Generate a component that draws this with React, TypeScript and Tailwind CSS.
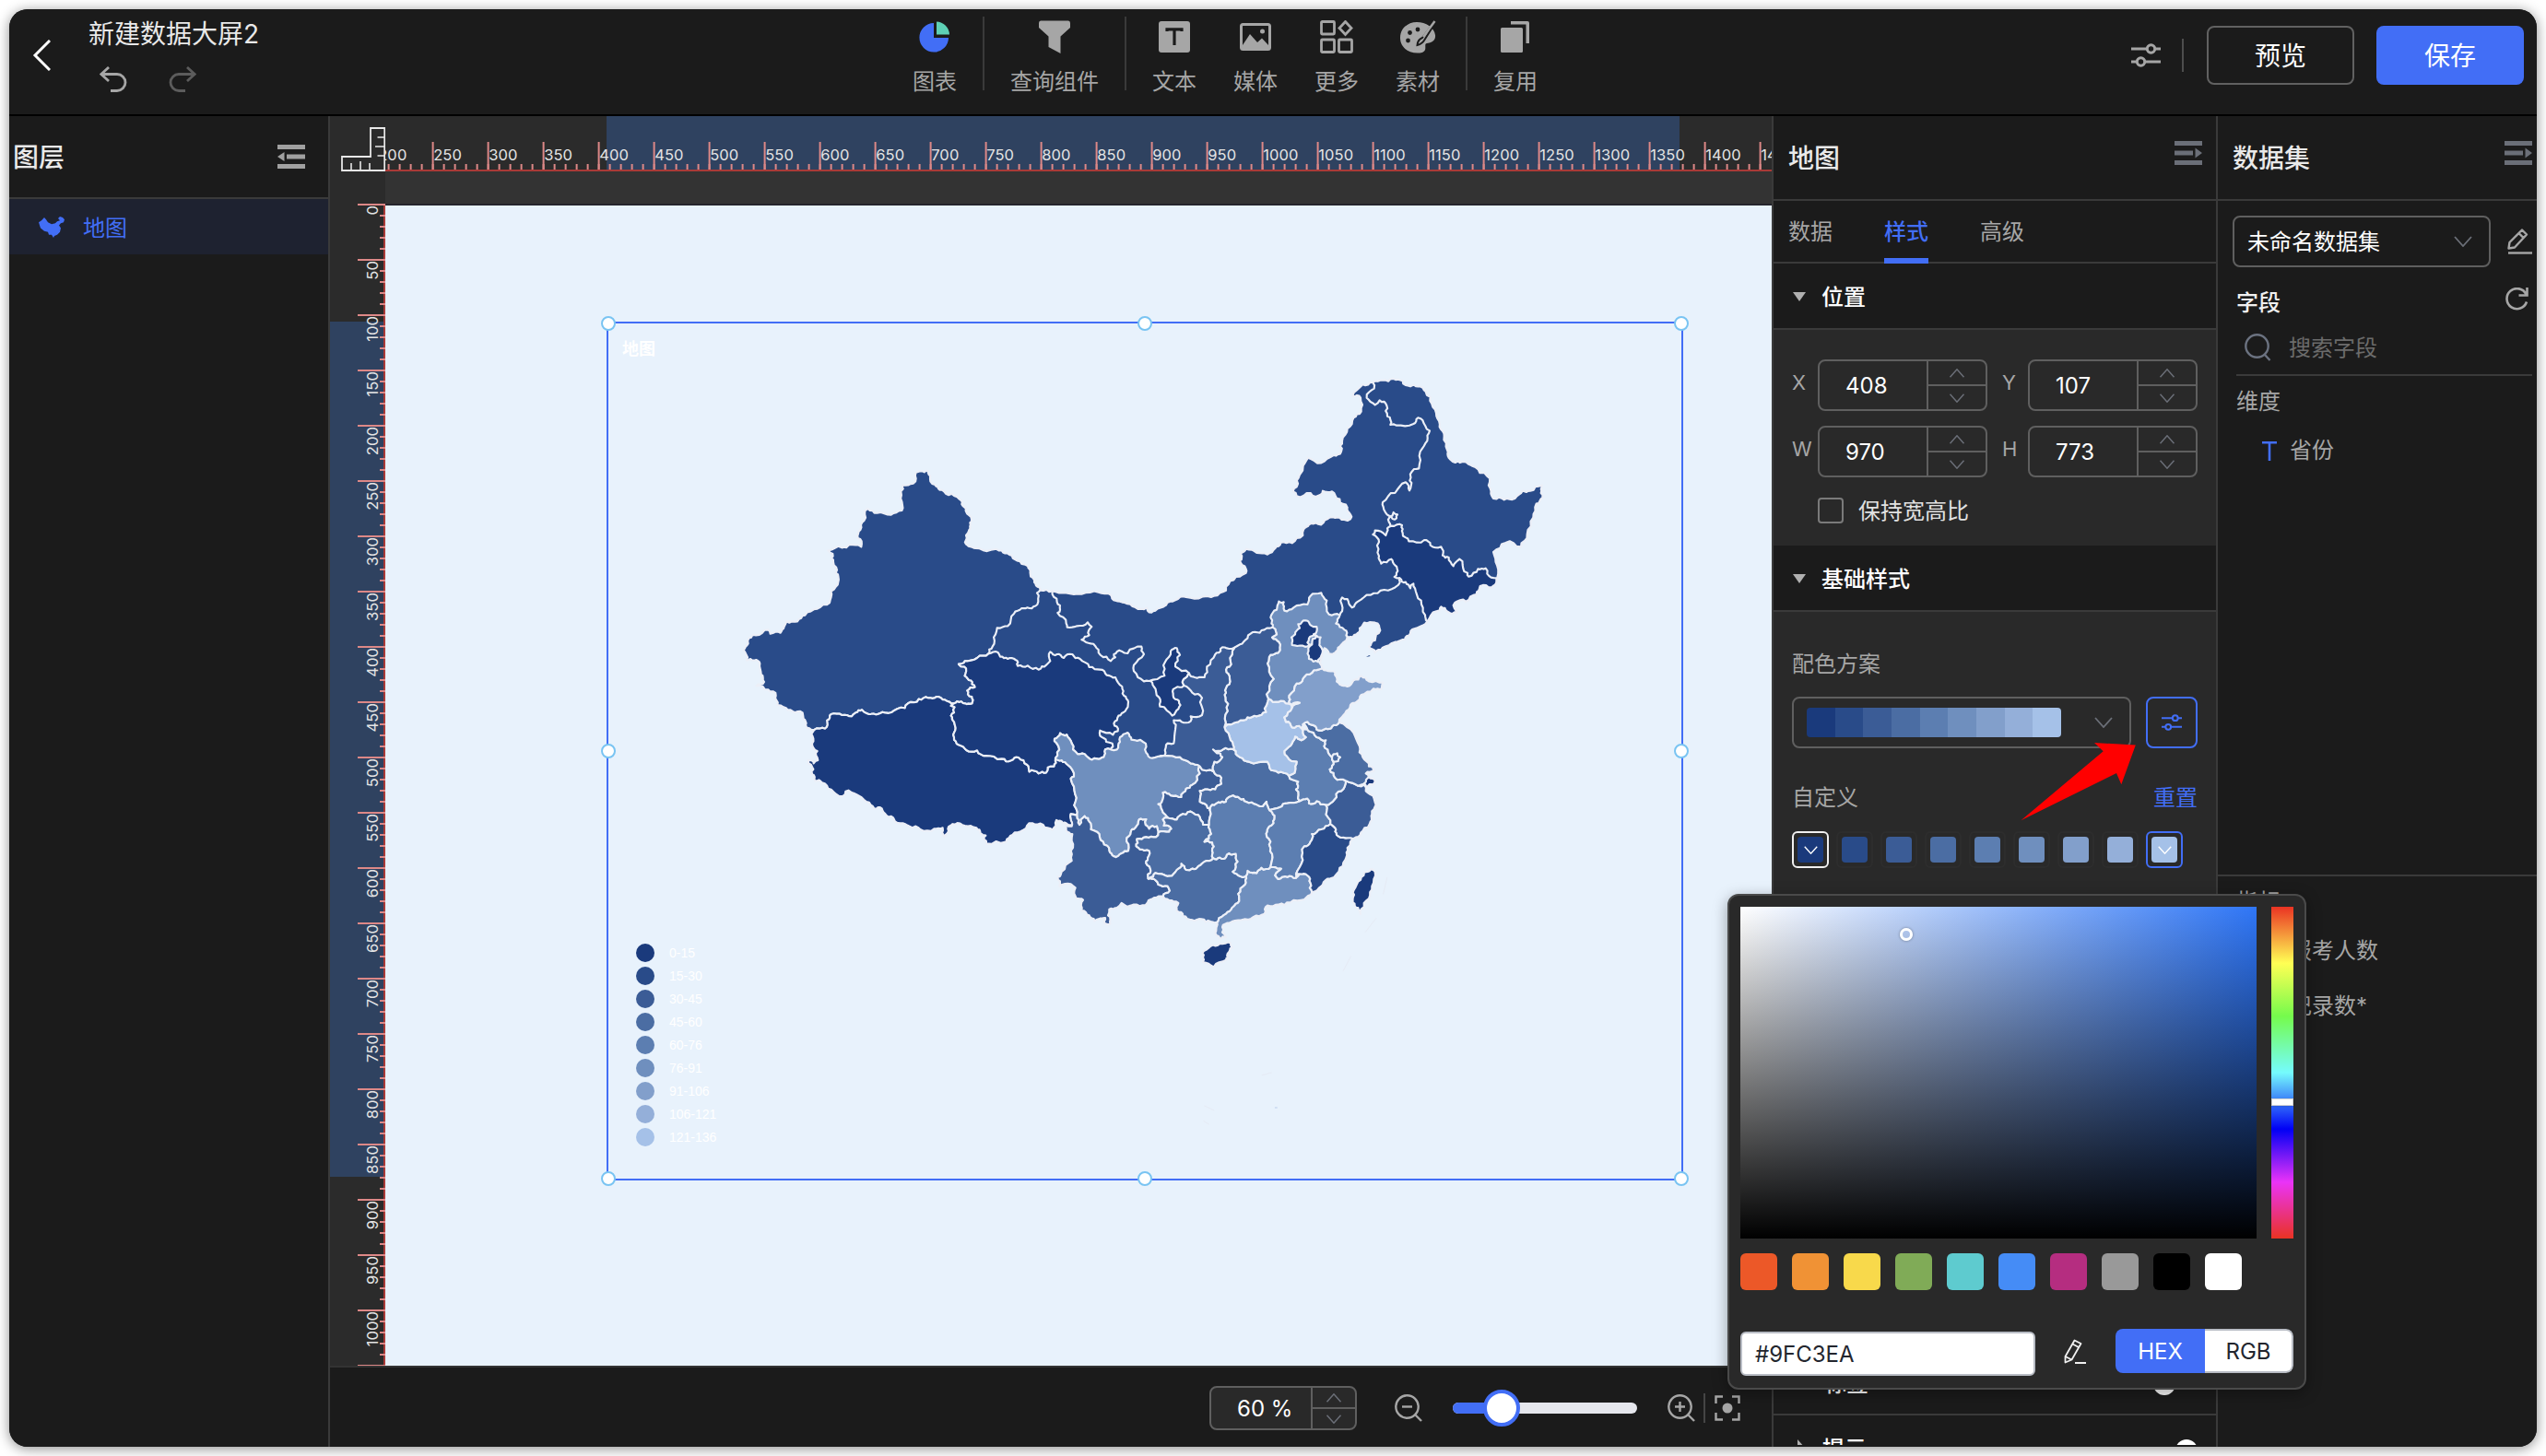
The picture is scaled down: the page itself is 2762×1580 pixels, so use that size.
import React from "react";

/* ---------- shared palette ---------- */

const LEVELS = ["#1a3a7c", "#294b89", "#3b5c96", "#4b6da3", "#5c7eb1", "#6f8fbe", "#829fcb", "#94afd9", "#a5c1e8"];

/* ---------- map geometry ---------- */

type Pt = [number, number];
type Origin = "west" | "north" | "south";

const ORIGINS: Record<Origin, Pt> = {
  west: [2340, 1440],
  north: [3660, 1140],
  south: [3300, 1920],
};

function parse(points: string, origin: Origin): Pt[] {
  const [ox, oy] = ORIGINS[origin];
  return points
    .trim()
    .split(/\s+/)
    .map((p) => {
      const [x, y] = p.split(",").map(Number);
      return [x + ox, y + oy] as Pt;
    });
}

/* Adds small deterministic bends so that neighbouring regions share the same coastline texture. */
function bend(a: Pt, b: Pt, depth: number): Pt[] {
  const dx = b[0] - a[0];
  const dy = b[1] - a[1];
  const len = Math.hypot(dx, dy);
  if (len < 11 || depth === 0) return [b];
  const mx = (a[0] + b[0]) / 2;
  const my = (a[1] + b[1]) / 2;
  const noise = Math.sin(mx * 12.9898 + my * 78.233) * 43758.5453;
  const r = (noise - Math.floor(noise) - 0.5) * 2;
  const dir = a[0] < b[0] || (a[0] === b[0] && a[1] < b[1]) ? 1 : -1;
  const k = (Math.min(len * 0.25, 6) * r * dir) / len;
  const m: Pt = [Math.round((mx - dy * k) * 10) / 10, Math.round((my + dx * k) * 10) / 10];
  return [...bend(a, m, depth - 1), ...bend(m, b, depth - 1)];
}

function toPath(points: string, origin: Origin, closed: boolean) {
  const pts = parse(points, origin);
  const out: Pt[] = [pts[0]];
  for (let i = 1; i < pts.length; i++) out.push(...bend(pts[i - 1], pts[i], 2));
  if (closed) out.push(...bend(pts[pts.length - 1], pts[0], 2));
  return "M" + out.map((p) => p.join(",")).join("L") + (closed ? "Z" : "");
}

const REGIONS: { name: string; origin: Origin; level: number; pts: string }[] = [
  {
    name: "north",
    origin: "north",
    level: 2,
    pts: "-274,782 -235,784 -190,790 -140,794 -85,788 -45,797 -30,815 0,822 35,837 72,838 75,848 100,848 135,830 165,814 200,804 255,802 290,800 330,782 355,748 395,725 395,712 375,685 378,665 395,647 430,660 465,665 490,645 508,627 545,628 580,603 582,585 600,568 630,566 660,550 685,546 715,552 735,550 735,535 725,512 700,485 675,460 645,458 622,477 605,465 560,475 548,460 560,445 570,405 597,350 640,367 680,342 705,330 708,295 725,255 745,220 770,200 768,155 742,150 775,112 808,105 840,98 875,93 905,100 930,118 955,118 980,135 1000,175 1015,215 1025,250 1040,280 1050,325 1055,350 1068,363 1100,363 1140,380 1180,410 1190,450 1200,483 1235,487 1270,483 1295,458 1320,458 1358,440 1355,465 1360,480 1340,500 1330,545 1310,600 1290,640 1240,627 1200,657 1212,700 1210,755 1195,772 1157,768 1145,795 1110,818 1075,822 1083,855 1050,850 1030,835 1015,850 985,883 950,905 930,922 912,942 880,950 840,968 815,985 795,965 815,945 832,912 815,887 780,887 765,905 755,925 728,935 700,915 500,1000 300,1250 130,1320 90,1340 -60,1330 -300,1100 -443,990 -600,900 -400,750",
  },
  {
    name: "xinjiang",
    origin: "west",
    level: 2,
    pts: "641,98 655,94 668,97 680,93 683,105 687,116 688,127 703,138 718,155 738,167 757,167 775,178 789,190 797,210 803,223 815,238 817,262 814,285 804,303 803,320 812,338 835,345 885,350 920,352 945,366 970,385 985,396 1000,400 1013,418 1020,440 1030,460 1046,478 1035,490 1036,528 1010,540 985,540 960,558 940,598 905,604 900,625 890,665 877,688 840,702 800,712 780,722 798,730 800,760 820,775 833,797 808,808 810,820 823,828 824,850 800,850 775,843 765,850 735,838 708,828 680,832 650,836 615,850 605,865 580,868 540,880 510,886 480,882 465,871 445,880 432,892 400,888 365,885 352,905 345,932 310,936 282,920 275,900 272,880 240,876 210,862 190,855 185,825 160,805 143,795 122,793 147,780 137,755 133,720 115,710 90,710 88,690 80,676 95,655 98,637 120,628 160,610 167,623 200,620 212,600 220,583 255,583 280,563 320,542 360,522 365,485 380,470 388,455 380,425 372,390 370,363 355,352 400,343 425,333 463,340 464,322 452,312 460,285 472,255 484,216 515,230 560,236 595,222 597,205 592,160 598,140 632,134 641,118",
  },
  {
    name: "tibet",
    origin: "west",
    level: 1,
    pts: "310,936 345,932 352,905 365,885 400,888 432,892 445,880 465,871 480,882 510,886 540,880 580,868 605,865 615,850 650,836 680,832 708,828 735,838 765,850 755,858 767,862 765,880 755,890 765,910 770,930 765,960 780,985 805,1002 840,1003 870,1020 920,1030 950,1036 975,1026 1003,1050 1010,1072 1040,1078 1065,1075 1070,1058 1090,1055 1095,1030 1115,1035 1135,1050 1155,1088 1145,1095 1155,1120 1160,1170 1165,1215 1145,1210 1145,1225 1150,1245 1130,1240 1110,1232 1098,1230 1085,1262 1055,1245 1020,1240 990,1262 955,1278 935,1300 870,1306 868,1280 850,1272 838,1255 800,1248 768,1244 745,1258 733,1285 728,1255 700,1258 655,1260 620,1250 590,1240 570,1228 545,1215 530,1192 505,1192 480,1170 445,1145 412,1136 402,1152 365,1130 335,1108 312,1102 303,1080 300,1050 290,1035 308,1045 322,1035 320,1005 303,980 301,950",
  },
  {
    name: "qinghai",
    origin: "west",
    level: 1,
    pts: "780,722 800,712 840,702 877,688 908,684 915,698 940,705 965,708 972,728 1005,727 1040,740 1065,725 1078,712 1078,682 1100,690 1122,702 1150,690 1175,705 1205,732 1240,740 1262,758 1290,765 1312,795 1318,825 1332,845 1322,875 1300,890 1285,915 1298,940 1282,952 1240,938 1240,955 1260,975 1280,980 1275,1000 1257,1000 1252,1025 1230,1030 1200,1025 1175,1015 1152,1000 1148,980 1132,952 1110,947 1092,965 1105,990 1095,1028 1095,1030 1090,1055 1070,1058 1065,1075 1040,1078 1010,1072 1003,1050 975,1026 950,1036 920,1030 870,1020 840,1003 805,1002 780,985 765,960 770,930 765,910 755,890 765,880 767,862 755,858 765,850 775,843 800,850 824,850 823,828 810,820 808,808 833,797 820,775 800,760 798,730",
  },
  {
    name: "sichuan",
    origin: "south",
    level: 6,
    pts: "132,485 150,467 172,472 188,500 192,520 215,535 240,545 270,550 292,545 297,520 315,520 335,520 345,495 345,480 370,465 382,488 420,495 430,530 450,548 490,540 540,545 575,565 605,575 605,598 580,635 560,648 545,675 510,670 485,660 485,680 470,698 485,725 515,745 485,748 488,768 512,778 505,788 470,790 465,770 440,778 428,765 430,747 408,747 395,775 380,790 367,808 372,850 350,858 325,868 310,850 290,820 270,788 250,780 245,755 230,737 213,765 205,735 200,690 195,640 185,615 195,608 175,570 155,555 135,548 145,510",
  },
  {
    name: "yunnan",
    origin: "south",
    level: 3,
    pts: "205,735 213,765 230,737 245,755 250,780 270,788 290,820 310,850 325,868 350,858 372,850 367,808 380,790 395,775 408,747 430,747 428,765 440,778 465,770 470,790 462,805 430,805 400,812 398,835 410,845 440,850 435,880 430,890 445,915 437,940 460,945 470,960 500,965 507,980 485,998 470,998 445,1008 435,1018 400,1025 380,1028 368,1032 350,1020 335,1035 310,1040 306,1060 313,1088 300,1088 297,1068 280,1070 262,1078 245,1060 220,1045 225,1010 203,1005 200,970 185,958 148,965 143,935 155,918 188,882 192,840 190,795 170,785 168,765 188,770 185,745 185,730",
  },
  {
    name: "chongqing",
    origin: "south",
    level: 3,
    pts: "605,575 650,592 675,612 675,632 655,650 640,652 605,655 605,690 630,710 638,718 635,765 615,765 605,740 590,732 575,722 560,732 540,735 530,748 515,745 485,725 470,698 485,680 485,660 510,670 545,675 560,648 580,635 605,598",
  },
  {
    name: "guizhou",
    origin: "south",
    level: 4,
    pts: "515,745 530,748 540,735 560,732 575,722 590,732 605,740 615,765 635,765 642,795 620,820 645,822 645,850 648,873 620,885 600,900 580,908 560,912 545,892 530,912 505,932 480,925 460,922 440,940 437,940 445,915 430,890 435,880 440,850 410,845 398,835 400,812 430,805 462,805 470,790 505,788 512,778 488,768 485,748",
  },
  {
    name: "guangxi",
    origin: "south",
    level: 4,
    pts: "648,873 670,872 690,870 700,858 722,860 728,885 712,918 735,932 755,932 752,960 730,990 728,1020 710,1035 690,1055 665,1078 640,1080 610,1072 580,1075 550,1062 530,1045 535,1020 520,1015 490,1005 485,998 507,980 500,965 470,960 460,945 437,940 440,940 460,922 480,925 505,932 530,912 545,892 560,912 580,908 600,900 620,885",
  },
  {
    name: "guangdong",
    origin: "south",
    level: 6,
    pts: "755,932 760,915 790,922 805,905 835,903 845,903 870,908 850,930 860,942 890,935 918,938 930,925 955,930 965,955 970,985 945,1008 900,1018 860,1025 825,1028 815,1055 780,1065 740,1075 700,1085 678,1098 678,1115 690,1132 670,1135 658,1110 662,1090 665,1078 690,1055 710,1035 728,1020 730,990 752,960",
  },
  {
    name: "hubei",
    origin: "south",
    level: 4,
    pts: "648,520 680,520 715,520 735,545 765,560 825,560 832,580 860,595 895,605 925,625 918,650 930,688 890,695 865,708 832,718 822,690 810,705 790,700 755,690 735,680 705,673 690,690 665,692 645,700 638,718 630,710 605,690 605,655 640,652 655,650 675,632 675,612 650,592 652,560 678,545 660,532",
  },
  {
    name: "hunan",
    origin: "south",
    level: 5,
    pts: "638,718 645,700 665,692 690,690 705,673 735,680 755,690 790,700 810,705 822,690 832,718 848,735 845,760 828,775 822,800 835,820 840,860 835,903 805,905 790,922 760,915 755,932 735,932 712,918 728,885 722,860 700,858 690,870 670,872 648,873 645,850 645,822 620,820 642,795 635,765",
  },
  {
    name: "jiangxi",
    origin: "south",
    level: 5,
    pts: "832,718 865,708 890,695 930,688 955,680 960,695 985,688 1015,700 1018,720 1030,762 1000,780 970,795 965,820 945,835 940,880 918,925 918,938 890,935 860,942 850,930 870,908 845,903 835,903 840,860 835,820 822,800 828,775 845,760 848,735",
  },
  {
    name: "fujian",
    origin: "south",
    level: 2,
    pts: "1030,762 1045,775 1050,798 1080,808 1112,806 1085,840 1082,870 1060,905 1030,940 1005,960 980,982 970,985 965,955 955,930 930,925 918,925 940,880 945,835 965,820 970,795 1000,780",
  },
  {
    name: "zhejiang",
    origin: "south",
    level: 3,
    pts: "1080,622 1120,638 1140,635 1145,655 1172,680 1178,700 1165,730 1160,755 1135,785 1112,806 1080,808 1050,798 1045,775 1030,762 1018,720 1015,700 1030,695 1048,665 1065,655",
  },
  {
    name: "anhui",
    origin: "south",
    level: 5,
    pts: "935,450 955,455 975,465 985,480 1015,490 1012,515 1035,545 1040,560 1028,585 1045,612 1080,622 1065,655 1048,665 1030,695 1015,700 985,688 960,695 955,680 930,688 918,650 925,625 895,605 915,590 920,560 890,545 880,525 905,500 915,478 935,490 950,480",
  },
  {
    name: "henan",
    origin: "south",
    level: 9,
    pts: "685,447 730,430 760,415 790,412 820,398 828,355 860,365 895,370 905,385 880,415 885,430 905,448 935,450 950,480 935,490 915,478 905,500 880,525 890,545 920,560 915,590 895,605 860,595 832,580 825,560 765,560 735,545 715,520 705,490",
  },
  {
    name: "jiangsu",
    origin: "south",
    level: 4,
    pts: "940,438 955,430 970,440 985,455 1015,452 1035,445 1058,432 1105,465 1125,510 1135,545 1155,575 1172,590 1145,598 1155,610 1140,632 1120,638 1080,622 1045,612 1028,585 1040,560 1035,545 1012,515 1015,490 985,480 975,465 955,455",
  },
  { name: "shanghai", origin: "south", level: 1, pts: "1140,630 1155,610 1175,625 1170,635 1145,640" },
  {
    name: "shandong",
    origin: "south",
    level: 7,
    pts: "895,370 895,345 920,305 940,290 970,270 1003,256 1030,265 1045,268 1050,285 1060,308 1085,315 1105,295 1130,280 1155,298 1200,302 1197,322 1170,322 1130,342 1115,365 1095,375 1078,402 1058,432 1035,445 1015,452 985,455 970,440 955,430 940,438 935,450 905,448 885,430 880,415 905,385 930,368 905,375",
  },
  {
    name: "hebei",
    origin: "south",
    level: 6,
    pts: "835,90 855,65 862,38 878,40 880,68 910,58 955,48 965,20 1000,10 1018,35 1025,80 1060,83 1048,110 1075,130 1085,155 1060,185 1045,205 1025,208 1010,190 995,238 1003,256 970,270 940,290 920,305 895,345 895,370 860,365 828,355 822,340 845,290 825,240 835,212 860,205 862,170 840,155 855,145 850,128 838,110",
  },
  {
    name: "beijing",
    origin: "south",
    level: 1,
    pts: "915,145 930,125 925,112 950,100 965,115 985,120 975,145 985,150 960,158 955,172 970,178 940,182 905,180 903,155",
  },
  {
    name: "tianjin",
    origin: "south",
    level: 1,
    pts: "985,150 998,155 994,180 1005,198 1000,215 990,235 960,225 958,190 970,178 972,160",
  },
  {
    name: "shanxi",
    origin: "south",
    level: 3,
    pts: "850,128 855,145 840,155 862,170 860,205 835,212 825,240 845,290 822,340 828,355 820,398 790,412 760,415 730,430 685,447 695,395 688,350 690,320 702,290 690,260 705,235 718,188 735,178 760,158 770,143 800,140 815,130",
  },
  {
    name: "shaanxi",
    origin: "south",
    level: 3,
    pts: "685,447 695,395 688,350 690,320 702,290 690,260 705,235 718,188 700,192 672,192 655,210 628,250 620,285 588,285 570,272 553,290 553,312 580,335 612,352 612,408 575,412 575,428 545,430 520,425 525,455 520,500 495,505 490,540 540,545 575,565 605,575 650,592 652,560 678,545 660,532 648,520 680,520 715,520 705,490",
  },
  {
    name: "ningxia",
    origin: "south",
    level: 1,
    pts: "440,297 490,280 492,235 510,200 530,190 540,212 525,250 570,272 553,290 553,312 525,320 518,345 537,362 535,388 515,410 475,380 472,350 455,315",
  },
  {
    name: "jilin",
    origin: "north",
    level: 1,
    pts: "868,572 903,570 905,595 925,622 975,618 995,635 1030,640 1035,668 1055,675 1070,703 1090,680 1105,720 1120,737 1150,712 1175,710 1180,728 1210,742 1210,755 1195,772 1157,768 1145,795 1110,818 1075,822 1083,855 1050,850 1030,835 1015,850 985,883 978,862 965,815 945,775 940,760 930,775 915,755 895,742 878,738 885,725 880,700 868,680 835,695 828,670 828,625 808,600 815,587 850,603 855,580",
  },
  {
    name: "taiwan",
    origin: "south",
    level: 1,
    pts: "1160,910 1175,918 1165,965 1155,1005 1130,1040 1128,1056 1120,1035 1103,1018 1103,985 1120,950 1140,920",
  },
  { name: "hainan", origin: "south", level: 1, pts: "705,1150 710,1165 695,1185 690,1205 650,1228 615,1212 613,1182 640,1160 670,1152" },
];

const BORDERS: { origin: Origin; pts: string }[] = [
  {
    origin: "west",
    pts: "1085,484 1100,520 1110,545 1102,555 1130,590 1133,602 1165,598 1200,586 1213,600 1205,628 1180,643 1210,655 1235,675 1242,693 1275,712 1290,700 1285,690 1310,680 1330,687 1375,665 1383,690 1350,725 1350,745 1383,778 1400,777",
  },
  {
    origin: "north",
    pts: "808,105 812,125 788,155 815,178 830,163 853,180 855,215 865,243 885,245 940,240 955,220 970,228 993,262 985,295 962,330 958,385 942,387 928,425 927,457 915,430 880,465 840,495 842,510 862,540 885,547 888,535 875,528 862,545 865,572",
  },
  { origin: "north", pts: "895,742 890,765 845,780 800,797 760,818 740,838 725,810 708,805 708,850 700,863" },
  { origin: "south", pts: "1035,545 1040,535 1052,532 1062,545 1055,558 1040,560" },
];

function ChinaMap() {
  return (
    <svg className="absolute inset-0 h-full w-full" viewBox="1980 1053 3492 2784" preserveAspectRatio="none">
      <g stroke="#eceff7" strokeWidth="6.5" strokeLinejoin="round" strokeLinecap="round">
        {REGIONS.map((r) => (
          <path key={r.name} d={toPath(r.pts, r.origin, true)} fill={LEVELS[r.level - 1]} />
        ))}
        {BORDERS.map((b, i) => (
          <path key={i} d={toPath(b.pts, b.origin, false)} fill="none" />
        ))}
      </g>
      <path d="M4446,2139l10,-6l4,3z" fill={LEVELS[1]} />
      <g stroke="#e6ebf5" strokeWidth="3" strokeLinecap="round">
        <path d="M4514,2858l-12,52M4478,2990l-34,44M4396,3114l-24,46M4108,3500l30,-8M3920,3600l30,14M3918,3650l16,10" />
        <path d="M4150,3606h6" stroke="#b9cdea" />
      </g>
    </svg>
  );
}

/* ---------- rulers ---------- */

const range = (from: number, to: number, step: number) =>
  Array.from({ length: Math.floor((to - from) / step) + 1 }, (_, i) => from + i * step);

function TopRuler() {
  const x = (v: number) => 168.6 + 1.2 * v - 418;
  return (
    <svg className="block h-[60px] w-[1504px] bg-[#2b2b2b]" viewBox="0 0 1504 60">
      <rect x="240" y="0" width="1164" height="58" fill="#2f4260" />
      <rect x="0" y="58" width="1504" height="2" fill="#a93a37" />
      {range(210, 1450, 10).map((v) => (
        <rect key={v} x={x(v)} y="52" width="2" height="6" fill="#dd8887" />
      ))}
      {range(200, 1450, 50).map((v) => (
        <g key={v}>
          <rect x={x(v)} y="28" width="2" height="30" fill="#dd8887" />
          <text x={x(v) + 1.6} y="48" fontSize="16.500" letterSpacing="0.100" fill="#e4e4e4">
            {v}
          </text>
        </g>
      ))}
    </svg>
  );
}

function SideRuler() {
  const y = (v: number) => 1.2 * v + 35;
  return (
    <svg className="block h-[1296px] w-[60px] shrink-0 bg-[#2b2b2b]" viewBox="0 0 60 1296">
      <rect x="0" y="163" width="58" height="928" fill="#2f4260" />
      <rect x="58" y="37" width="2" height="1260" fill="#a93a37" />
      {range(0, 1050, 10).map((v) => (
        <rect key={v} x="54" y={y(v)} width="6" height="2" fill="#dd8887" />
      ))}
      {range(0, 1050, 50).map((v) => (
        <rect key={v} x="30" y={y(v)} width="30" height="2" fill="#dd8887" />
      ))}
      {range(0, 1000, 50).map((v) => (
        <text key={v} transform={`translate(52 ${y(v) + 2}) rotate(-90)`} textAnchor="end" fontSize="16.500" letterSpacing="0.100" fill="#e4e4e4">
          {v}
        </text>
      ))}
    </svg>
  );
}

function RulerCorner() {
  return (
    <svg className="block h-[60px] w-[60px] shrink-0 bg-[#2b2b2b]" viewBox="0 0 60 60" fill="none" stroke="#e8e8e8" strokeWidth="1.800">
      <path d="M13,59V44H44V13H59.200V59Z" />
      <path d="M23,59V51M33,59V49M43,59V51M59,23H51.500M59,33H49M59,43H51.500" strokeWidth="1.600" />
    </svg>
  );
}

/* ---------- small icons ---------- */

type IconProps = { className?: string };

const Sliders = ({ className = "" }: IconProps) => (
  <svg className={className} viewBox="0 0 32 28" fill="none" stroke="currentColor" strokeWidth="3">
    <path d="M0,7H17M26,7H32M0,21H6M15,21H32" />
    <circle cx="21.500" cy="7" r="4.2" />
    <circle cx="10.500" cy="21" r="4.2" />
  </svg>
);

const Chevron = ({ className = "" }: IconProps) => (
  <svg className={className} viewBox="0 0 20 12" fill="none" stroke="currentColor" strokeWidth="1.8">
    <path d="M1,1L10,11L19,1" />
  </svg>
);

const Fold = ({ className = "", left = false }: IconProps & { left?: boolean }) => (
  <svg className={className} viewBox="0 0 30 26" fill="currentColor">
    <path d="M0,0H30V5H0ZM0,21H30V26H0Z" />
    {left ? <path d="M10,10.500H30V15.500H10ZM0,13L7.500,8V18Z" /> : <path d="M0,10.500H20V15.500H0ZM30,13L22.500,7.500V18.500Z" />}
  </svg>
);

const EditPen = ({ className = "" }: IconProps) => (
  <svg className={className} viewBox="0 0 28 28" fill="none" stroke="currentColor" strokeWidth="2.4" strokeLinejoin="round">
    <path d="M1.500,21.500L2.500,15L16,1.500L21,6.500L8,20.500Z M12.500,5L17.500,10" />
    <path d="M1,26.500H27" />
  </svg>
);

const Zoom = ({ className = "", plus = false }: IconProps & { plus?: boolean }) => (
  <svg className={className} viewBox="0 0 30 30" fill="none" stroke="currentColor" strokeWidth="2.4">
    <circle cx="13.500" cy="13.500" r="12.200" />
    <path d="M22.500,22.500L29,29" />
    <path d={plus ? "M8,13.500H19M13.500,8V19" : "M8,13.500H19"} />
  </svg>
);

const iconBox = "h-9 w-9";

const PieIcon = () => (
  <svg className={iconBox} viewBox="0 0 36 36">
    <path d="M17,3A15.800,15.800 0 1 0 33,19H17Z" fill="#426ef6" />
    <path d="M20,1.500A14.500,14.500 0 0 1 34,15.500H20Z" fill="#5ed0b5" />
  </svg>
);
const FunnelIcon = () => (
  <svg className={iconBox} viewBox="0 0 36 36" fill="#a6a6a6">
    <path d="M3,0.500H33Q35,0.500 35,3V8L24.500,17.500V36L11.500,29V17.500L1,8V3Q1,0.500 3,0.500Z" />
  </svg>
);
const TextIcon = () => (
  <svg className={iconBox} viewBox="0 0 36 36">
    <rect x="1" y="1" width="34" height="34" rx="3" fill="#a6a6a6" />
    <path d="M10,12V9.800H26V12M18,9.800V27" fill="none" stroke="#1b1b1b" strokeWidth="3.2" />
  </svg>
);
const MediaIcon = () => (
  <svg className={iconBox} viewBox="0 0 36 36">
    <rect x="2.500" y="4.500" width="31" height="27" rx="2" fill="none" stroke="#a6a6a6" strokeWidth="3" />
    <path d="M4,27L12,15L20,24L25,19.500L32,27V31H4Z" fill="#a6a6a6" />
    <circle cx="25.500" cy="12" r="2.500" fill="#a6a6a6" />
  </svg>
);
const MoreIcon = () => (
  <svg className={iconBox} viewBox="0 0 36 36" fill="none" stroke="#a6a6a6" strokeWidth="2.800">
    <rect x="1.500" y="1.500" width="14" height="13.500" rx="1" />
    <rect x="1.500" y="21" width="14" height="13.500" rx="1" />
    <rect x="20.500" y="21" width="14" height="13.500" rx="1" />
    <path d="M27.500,1.500L34,8.500L27.500,15.500L21,8.500Z" />
  </svg>
);
const PaletteIcon = () => (
  <svg className="h-9 w-10" viewBox="0 0 40 36">
    <path
      d="M19,2C29,2 38,8 39,16C40,23 33,25 30,25C27,25 29,29 28,32C27,35 23,35.500 20,35.500C8,35.500 1,28 1,19C1,9 9,2 19,2Z"
      fill="#a6a6a6"
    />
    <g fill="#1b1b1b">
      <circle cx="20" cy="10" r="2.400" />
      <circle cx="11.500" cy="13.500" r="2.400" />
      <circle cx="9.500" cy="22" r="2.400" />
    </g>
    <path d="M39,0.500L25,19Q20,21 19.500,27Q25,25.500 27.500,21L40,1Z" fill="#a6a6a6" stroke="#1b1b1b" strokeWidth="2" />
    <path d="M38.500,1L26,18" stroke="#a6a6a6" strokeWidth="2.500" />
  </svg>
);
const ReuseIcon = () => (
  <svg className={iconBox} viewBox="0 0 36 36" fill="#a6a6a6">
    <rect x="2" y="8" width="24" height="27" rx="1.500" />
    <path d="M13,1H31Q33,1 33,3V25H29.500V4.500H13Z" />
  </svg>
);

/* ---------- header ---------- */

function Tool({ icon, label, width }: { icon: React.ReactNode; label: string; width: string }) {
  return (
    <div className={`flex shrink-0 flex-col items-center ${width}`}>
      <div className="flex h-9 items-center">{icon}</div>
      <span className="mt-[19px] whitespace-nowrap text-2xl leading-6 text-[#a6a6a6]">{label}</span>
    </div>
  );
}

const ToolRule = () => <div className="mt-2 h-20 w-[2px] shrink-0 bg-[#3a3a3a]" />;

function Header() {
  return (
    <header className="flex h-[116px] shrink-0 border-b-2 border-black bg-[#1b1b1b]">
      <div className="flex w-[946px] shrink-0">
        <svg className="ml-[25px] mt-[33px] h-[34px] w-5 shrink-0" viewBox="0 0 20 34" fill="none" stroke="#fff" strokeWidth="3">
          <path d="M19,1L3,17L19,33" />
        </svg>
        <div className="ml-[41px] mt-[13px]">
          <div className="whitespace-nowrap text-[28px] leading-7 text-[#e9e9e9]">新建数据大屏2</div>
          <div className="ml-3 mt-[21px] flex gap-[45px]">
            <svg className="h-7 w-[30px] text-[#a6a6a6]" viewBox="0 0 30 28" fill="none" stroke="currentColor" strokeWidth="2.800">
              <path d="M10,1L1.800,8.500L10,16M2,8.500H19A9,9 0 0 1 19,26.500H12" />
            </svg>
            <svg className="h-7 w-[30px] text-[#5c5c5c]" viewBox="0 0 30 28" fill="none" stroke="currentColor" strokeWidth="2.800">
              <path d="M20,1L28.200,8.500L20,16M28,8.500H11A9,9 0 0 0 11,26.500H18" />
            </svg>
          </div>
        </div>
      </div>
      <div className="flex">
        <div className="flex w-[110px] pt-3">
          <Tool icon={<PieIcon />} label="图表" width="w-[116px]" />
        </div>
        <ToolRule />
        <div className="flex pt-3">
          <Tool icon={<FunnelIcon />} label="查询组件" width="w-[152px]" />
        </div>
        <ToolRule />
        <div className="ml-2 flex pt-3">
          <Tool icon={<TextIcon />} label="文本" width="w-[88px]" />
          <Tool icon={<MediaIcon />} label="媒体" width="w-[88px]" />
          <Tool icon={<MoreIcon />} label="更多" width="w-[88px]" />
          <Tool icon={<PaletteIcon />} label="素材" width="w-[88px]" />
        </div>
        <div className="ml-2">
          <ToolRule />
        </div>
        <div className="flex pt-3">
          <Tool icon={<ReuseIcon />} label="复用" width="w-[104px]" />
        </div>
      </div>
      <div className="ml-auto mr-[14px] flex h-[100px] items-center">
        <Sliders className="h-7 w-8 text-[#a6a6a6]" />
        <div className="ml-[23px] h-9 w-[2px] bg-[#4d4d4d]" />
        <button className="ml-[25px] h-16 w-40 rounded-lg border-2 border-[#616161] pt-[2px] text-[28px] leading-none text-white">预览</button>
        <button className="ml-6 h-16 w-40 rounded-lg bg-[#426ef6] pt-[2px] text-[28px] leading-none text-white">保存</button>
      </div>
    </header>
  );
}

/* ---------- left panel ---------- */

function LayerPanel() {
  return (
    <aside className="w-[348px] shrink-0 border-r-2 border-[#3a3a3a] bg-[#1b1b1b]">
      <div className="flex h-[90px] items-center justify-between border-b-2 border-[#3a3a3a] pl-1 pr-[25px]">
        <span className="pt-[2px] text-[28px] font-medium leading-7 text-[#e9e9e9]">图层</span>
        <Fold left className="h-[26px] w-[30px] text-[#a0a0a0]" />
      </div>
      <div className="flex h-[60px] items-center bg-[#1e2230] pl-8">
        <svg className="h-[23px] w-7" viewBox="0 0 28 22" fill="#426ef6" preserveAspectRatio="none">
          <path d="M0,6L3,4L6,1L8,3L10,6L14,8L18,7L20,5L23,4L21,2L23,0L26,1L28,3L27,6L24,7L22,9L24,12L23,16L20,19L17,20L16,22L14,19L11,19L10,16L6,15L2,12L1,9Z" />
        </svg>
        <span className="ml-5 pt-[3px] text-2xl leading-6 text-[#426ef6]">地图</span>
      </div>
    </aside>
  );
}

/* ---------- canvas ---------- */

const LEGEND = ["0-15", "15-30", "30-45", "45-60", "60-76", "76-91", "91-106", "106-121", "121-136"];
const HANDLES = [
  "left-[-8px] top-[-8px]",
  "left-1/2 top-[-8px] -translate-x-1/2",
  "right-[-8px] top-[-8px]",
  "left-[-8px] top-1/2 -translate-y-1/2",
  "right-[-8px] top-1/2 -translate-y-1/2",
  "left-[-8px] bottom-[-8px]",
  "left-1/2 bottom-[-8px] -translate-x-1/2",
  "right-[-8px] bottom-[-8px]",
];

function MapWidget() {
  return (
    <div className="absolute left-[240px] top-[126px] h-[932px] w-[1168px] border-2 border-[#426ef6]">
      <ChinaMap />
      <div className="relative flex h-full flex-col justify-between pb-[33px] pl-[15px] pt-[19px]">
        <div className="text-[18px] font-bold leading-[18px] text-white">地图</div>
        <div className="pl-[15px]">
          {LEGEND.map((t, i) => (
            <div key={t} className="flex h-[25px] items-center gap-4">
              <span className="h-5 w-5 rounded-full" style={{ background: LEVELS[i] }} />
              <span className="pt-px font-['Liberation_Sans',sans-serif] text-sm text-white">{t}</span>
            </div>
          ))}
        </div>
      </div>
      {HANDLES.map((c) => (
        <span key={c} className={`absolute h-4 w-4 rounded-full border-2 border-[#79c4f2] bg-white ${c}`} />
      ))}
    </div>
  );
}

function Stepper({ value, box, half }: { value: string; box: string; half: string }) {
  return (
    <div className={`flex shrink-0 overflow-hidden rounded-lg border-2 border-[#5f5f5f] ${box}`}>
      <div className="flex flex-1 items-center whitespace-pre pl-7 pt-[2px] text-2xl leading-none text-white">{value}</div>
      <div className={`flex flex-col border-l-2 border-[#5f5f5f] text-[#6b6f78] ${half}`}>
        <div className="flex flex-1 items-center justify-center border-b-2 border-[#5f5f5f]">
          <Chevron className="h-[10px] w-[18px] rotate-180" />
        </div>
        <div className="flex flex-1 items-center justify-center">
          <Chevron className="h-[10px] w-[18px]" />
        </div>
      </div>
    </div>
  );
}

function Workspace() {
  return (
    <main className="flex w-[1564px] shrink-0 flex-col">
      <div className="flex h-[60px] shrink-0">
        <RulerCorner />
        <TopRuler />
      </div>
      <div className="flex h-[1296px] shrink-0">
        <SideRuler />
        <div className="flex w-[1504px] flex-col overflow-hidden bg-[#333]">
          <div className="h-[37px] shrink-0 border-b-2 border-[#25252c]" />
          <div className="relative flex-1 bg-[#e8f2fc]">
            <MapWidget />
          </div>
        </div>
      </div>
      <div className="flex flex-1 items-center border-t-2 border-[#333] bg-[#1b1b1b] pl-[954px] pt-[2px]">
        <Stepper value="60 %" box="h-12 w-40 bg-[#292929]" half="w-12" />
        <Zoom className="ml-[41px] h-[30px] w-[30px] text-[#a6a6a6]" />
        <div className="relative ml-[33px] flex h-10 w-[200px] items-center">
          <div className="h-3 w-full rounded-full bg-[#e6e7ed]" />
          <div className="absolute left-0 h-3 w-14 rounded-full bg-[#426ef6]" />
          <div className="absolute left-[33px] h-10 w-10 rounded-full border-4 border-[#426ef6] bg-white" />
        </div>
        <Zoom plus className="ml-[33px] h-[30px] w-[30px] text-[#a6a6a6]" />
        <div className="ml-[9px] h-8 w-[2px] bg-[#454545]" />
        <svg className="ml-[10px] h-7 w-7 text-[#a6a6a6]" viewBox="0 0 28 28" fill="none" stroke="currentColor" strokeWidth="2.400">
          <path d="M1.500,9V1.500H9M19,1.500H26.500V9M26.500,19V26.500H19M9,26.500H1.500V19" />
          <circle cx="14" cy="14" r="5.500" fill="currentColor" stroke="none" />
        </svg>
      </div>
    </main>
  );
}

/* ---------- style panel ---------- */

function SectionTitle({ label }: { label: string }) {
  return (
    <div className="flex h-[72px] shrink-0 items-center border-b-2 border-[#3a3a3a] bg-[#1b1b1b] pl-[21px] pt-[2px]">
      <span className="h-0 w-0 border-x-[7px] border-t-[10px] border-x-transparent border-t-[#b0b0b0]" />
      <span className="ml-[17px] pt-px text-2xl font-medium leading-6 text-white">{label}</span>
    </div>
  );
}

function Field({ label, value }: { label: string; value: string }) {
  return (
    <div className="flex">
      <span className="w-7 pt-[11px] text-[22px] leading-7 text-[#a6a6a6]">{label}</span>
      <Stepper value={value} box="h-14 w-[184px]" half="w-16" />
    </div>
  );
}

function StylePanel() {
  return (
    <section className="flex w-[484px] shrink-0 flex-col overflow-hidden border-x-2 border-[#3a3a3a] bg-[#1b1b1b]">
      <div className="flex h-[92px] shrink-0 justify-between border-b-2 border-[#3a3a3a] pl-4 pr-[15px]">
        <span className="self-center pt-[2px] text-[28px] font-medium leading-7 text-[#e9e9e9]">地图</span>
        <Fold className="mt-[27px] h-[26px] w-[30px] text-[#6b6f78]" />
      </div>
      <div className="flex h-[68px] shrink-0 gap-14 border-b-2 border-[#3a3a3a] pl-4 text-2xl leading-6 text-[#a6a6a6]">
        <span className="pt-[22px]">数据</span>
        <span className="h-[68px] border-b-[6px] border-[#426ef6] pt-[22px] font-medium text-[#426ef6]">样式</span>
        <span className="pt-[22px]">高级</span>
      </div>
      <SectionTitle label="位置" />
      <div className="flex h-[234px] shrink-0 flex-col bg-[#292929] pl-5 pt-8">
        <div className="flex gap-4">
          <Field label="X" value="408" />
          <Field label="Y" value="107" />
        </div>
        <div className="mt-4 flex gap-4">
          <Field label="W" value="970" />
          <Field label="H" value="773" />
        </div>
        <div className="ml-7 mt-[22px] flex items-center gap-4">
          <span className="h-7 w-7 rounded border-2 border-[#7a7a7a]" />
          <span className="pt-[2px] text-2xl leading-6 text-[#e2e2e2]">保持宽高比</span>
        </div>
      </div>
      <SectionTitle label="基础样式" />
      <div className="flex h-[798px] shrink-0 flex-col bg-[#292929] pl-5 pr-5 pt-[45px]">
        <span className="text-2xl leading-6 text-[#a6a6a6]">配色方案</span>
        <div className="mt-[23px] flex justify-between">
          <div className="flex h-14 w-[368px] items-center justify-between rounded-lg border-2 border-[#5f5f5f] pl-[14px] pr-[18px]">
            <div className="flex h-8 w-[276px] overflow-hidden rounded">
              {LEVELS.map((c) => (
                <span key={c} className="flex-1" style={{ background: c }} />
              ))}
            </div>
            <Chevron className="h-3 w-5 text-[#6b6f78]" />
          </div>
          <div className="flex h-14 w-14 items-center justify-center rounded-lg border-2 border-[#426ef6]">
            <Sliders className="h-5 w-[22px] text-[#426ef6]" />
          </div>
        </div>
        <div className="mt-[42px] flex justify-between text-2xl leading-6">
          <span className="text-[#a6a6a6]">自定义</span>
          <span className="text-[#426ef6]">重置</span>
        </div>
        <div className="mt-6 flex gap-2">
          {LEVELS.map((c, i) => (
            <div
              key={c}
              className={`flex h-10 w-10 items-center justify-center rounded-md border-2 ${
                i === 0 ? "border-[#f0f0f0]" : i === 8 ? "border-[#426ef6]" : "border-[#2d2d2d]"
              }`}
            >
              <span className="flex h-7 w-7 items-center justify-center rounded-sm" style={{ background: c }}>
                {(i === 0 || i === 8) && <Chevron className="h-[9px] w-[15px] text-white" />}
              </span>
            </div>
          ))}
        </div>
      </div>
      <div className="flex h-[74px] shrink-0 items-center justify-between border-b-2 border-[#3a3a3a] pl-[55px] pr-[22px]">
        <span className="pt-[7px] text-2xl font-medium leading-6 text-white">标签</span>
        <span className="mt-2 flex h-3 w-[46px] items-center rounded-full bg-[#b9b9bd]">
          <span className="h-6 w-6 shrink-0 rounded-full bg-white" />
        </span>
      </div>
      <div className="flex h-8 shrink-0 overflow-hidden pl-[26px] pr-5">
        <span className="mt-[26px] h-0 w-0 border-y-[9px] border-l-[8px] border-y-transparent border-l-[#b0b0b0]" />
        <span className="ml-[19px] mt-[25px] text-2xl font-medium leading-6 text-white">提示</span>
        <span className="ml-auto mt-[26px] h-6 w-6 rounded-full bg-white" />
      </div>
    </section>
  );
}

/* ---------- data panel ---------- */

function DataPanel() {
  return (
    <section className="flex flex-1 flex-col overflow-hidden bg-[#1b1b1b]">
      <div className="flex h-[92px] shrink-0 justify-between border-b-2 border-[#3a3a3a] pl-4 pr-[5px]">
        <span className="self-center pt-[2px] text-[28px] font-medium leading-7 text-[#e9e9e9]">数据集</span>
        <Fold className="mt-[27px] h-[26px] w-[30px] text-[#6b6f78]" />
      </div>
      <div className="mt-4 flex h-14 items-center pl-4">
        <div className="flex h-14 w-[280px] items-center justify-between rounded-lg border-2 border-[#5f5f5f] pl-[14px] pr-[18px]">
          <span className="pt-[2px] text-2xl leading-6 text-white">未命名数据集</span>
          <Chevron className="h-3 w-5 text-[#6b6f78]" />
        </div>
        <EditPen className="ml-[18px] h-7 w-7 text-[#a6a6a6]" />
      </div>
      <div className="mt-[22px] flex items-start justify-between pl-5 pr-[9px]">
        <span className="mt-[5px] text-2xl font-medium leading-6 text-[#f0f0f0]">字段</span>
        <svg className="h-[26px] w-[26px] text-[#a6a6a6]" viewBox="0 0 26 26" fill="none" stroke="currentColor" strokeWidth="2.600">
          <path d="M23.500,7.500A11,11 0 1 0 24,15.500M24.500,0V8.500H15.500" />
        </svg>
      </div>
      <div className="ml-5 mr-[5px] mt-[7px] flex h-[60px] items-center border-b-2 border-[#3a3a3a] pl-[9px]">
        <svg className="h-[30px] w-[30px] shrink-0 text-[#6b7280]" viewBox="0 0 30 30" fill="none" stroke="currentColor" strokeWidth="2.400">
          <circle cx="13.500" cy="13.500" r="12.200" />
          <path d="M22,23L27.500,29" />
        </svg>
        <span className="ml-[18px] pt-[2px] text-2xl leading-6 text-[#6b6b6b]">搜索字段</span>
      </div>
      <span className="ml-5 mt-4 text-2xl leading-6 text-[#a6a6a6]">维度</span>
      <div className="ml-12 mt-[29px] flex items-center">
        <svg className="h-[21px] w-4" viewBox="0 0 16 21" fill="none" stroke="#426ef6" strokeWidth="2.600">
          <path d="M0,1.300H16M8,1V21" />
        </svg>
        <span className="ml-[14px] text-2xl leading-6 text-[#a6a6a6]">省份</span>
      </div>
      <div className="mt-[448px] flex flex-1 flex-col border-t-2 border-[#3a3a3a] text-2xl leading-6 text-[#a6a6a6]">
        <span className="ml-5 mt-4">指标</span>
        <span className="ml-[78px] mt-[29px]">报考人数</span>
        <span className="ml-[78px] mt-9">记录数*</span>
      </div>
    </section>
  );
}

/* ---------- colour picker ---------- */

const PRESETS = ["#ec5828", "#f09235", "#f8d94b", "#80ab57", "#5ecbcf", "#458cf6", "#b52d80", "#999999", "#000000", "#ffffff"];

function ColorPicker() {
  return (
    <div className="absolute left-[1864px] top-[960px] h-[538px] w-[628px] rounded-xl border-2 border-[#4a4a4a] bg-[#292929] px-3 pt-3 shadow-[0_4px_16px_rgba(0,0,0,0.35)]">
      <div className="flex gap-4">
        <div className="relative h-[360px] w-[560px] bg-[linear-gradient(to_right,#ffffff,#2f76f6)]">
          <div className="h-full w-full bg-[linear-gradient(to_top,#000000,transparent)]" />
          <span className="absolute left-[173px] top-[23px] h-[14px] w-[14px] rounded-full border-[3px] border-white shadow-[0_0_3px_rgba(0,0,0,0.4)]" />
        </div>
        <div className="relative h-[360px] w-6 bg-[linear-gradient(to_bottom,#ea3323_0%,#ffff54_17%,#75fb4c_33%,#75fbfd_50%,#0000f5_67%,#ea33f7_83%,#ea3323_100%)]">
          <span className="absolute left-0 top-[208px] h-2 w-6 border border-[#d0d0d0] bg-white shadow" />
        </div>
      </div>
      <div className="mt-4 flex gap-4">
        {PRESETS.map((c) => (
          <span key={c} className="h-10 w-10 rounded-md" style={{ background: c }} />
        ))}
      </div>
      <div className="mt-[42px] flex items-start">
        <div className="mt-[3px] flex h-12 w-80 items-center rounded-md border-2 border-[#b8bcc4] bg-white pl-[14px] pt-[2px] text-2xl leading-none text-[#23262e]">
          #9FC3EA
        </div>
        <svg className="ml-[31px] mt-[11px] h-7 w-6" viewBox="0 0 24 28" fill="none" stroke="#f0f0f0" strokeWidth="1.800" strokeLinejoin="round">
          <path d="M1.500,25.500L1.500,19L11.500,1.500L18.500,5L8.500,22.500ZM9.500,5.500L16,9M1.500,19L8.500,22.500M12,26H24" />
        </svg>
        <div className="ml-8 flex h-12 w-[193px] overflow-hidden rounded-lg text-2xl leading-none">
          <span className="flex w-[97px] items-center justify-center bg-[#426ef6] pt-[2px] text-white">HEX</span>
          <span className="flex flex-1 items-center justify-center rounded-r-lg border-y-2 border-r-2 border-[#b8bcc4] bg-white pt-[2px] text-[#23262e]">
            RGB
          </span>
        </div>
      </div>
    </div>
  );
}

/* ---------- page ---------- */

export default function App() {
  return (
    <div className="h-[1580px] w-[2762px] overflow-hidden bg-white p-[10px] font-['Inter','Noto_Sans_CJK_SC',sans-serif]">
      <div className="relative h-[1560px] w-[2742px] rounded-[20px] shadow-[0_2px_14px_rgba(0,0,0,0.45)]">
        <div className="flex h-full flex-col overflow-hidden rounded-[20px] bg-[#1b1b1b]">
          <Header />
          <div className="flex min-h-0 flex-1">
            <LayerPanel />
            <Workspace />
            <StylePanel />
            <DataPanel />
          </div>
        </div>
        <ColorPicker />
        <svg className="absolute left-[2180px] top-[794px] h-[90px] w-[130px]" viewBox="0 0 130 90">
          <path d="M126.800,4.500L82,2L91.700,11.300L2.500,86.300L106,35L111.300,47.300Z" fill="#ff0000" />
        </svg>
      </div>
    </div>
  );
}
